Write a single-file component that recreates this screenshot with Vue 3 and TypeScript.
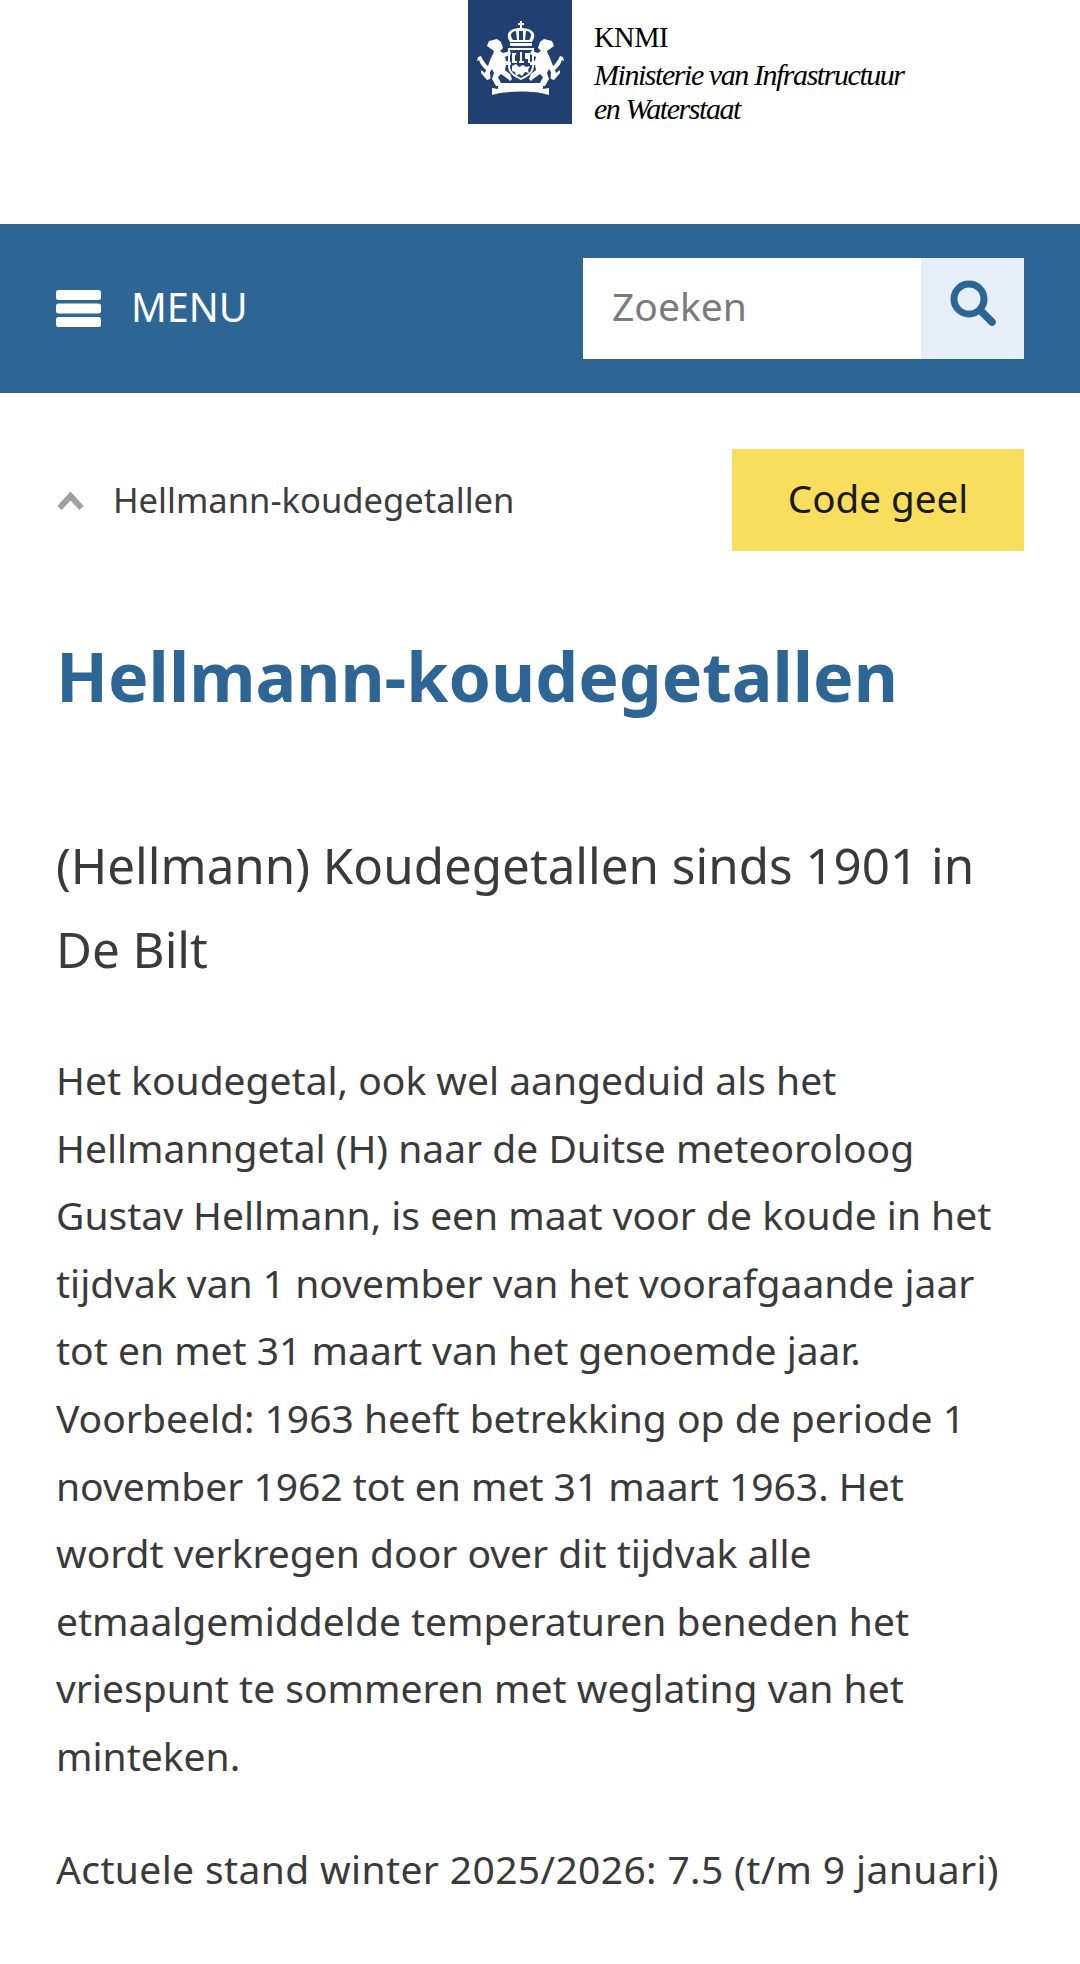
<template>
  <div class="page">
    <header class="brand">
      <div class="logo-block">
        <svg class="crest" viewBox="0 0 89 74" aria-hidden="true">
          <defs>
            <path
              id="lion"
              d="M11 25l2-5 8-2 4 3 2 6-3 3 3 2 7-2 1 3-6 3 1 4 5 1v3l-5 0-1 5 5 4 2 5-2 2-2-2-7-5-3 3 3 6 4 1v2h-9l-4-7 2-6-2-4-2 3c0 3 1 5 0 7l-3 1c-2-2-4-5-6-7l0-3 4 3 1-3c-3-3-6-6-7-10l-2 1 1-4 3-1 2 4c2 2 3 5 5 6l3-8c1-3 3-5 3-7z"
            />
          </defs>
          <g fill="#fff">
            <!-- crown -->
            <path d="M44 0h2v2h2v2h-2v3h-2v-3h-2v-2h2z" />
            <path
              fill-rule="evenodd"
              d="M32 13c1-4 7-6 13-6s12 2 13 6c1 3-1 6-2 8H34c-1-2-3-5-2-8zm3 1c0 2 1 4 2 5h4l-1-9c-3 0-5 2-5 4zm8-4v9h4v-9zm7 0-1 9h4c1-1 2-3 2-5s-2-4-5-4z"
            />
            <rect x="34" y="22" width="22" height="3" />
            <!-- shield -->
            <path
              fill-rule="evenodd"
              d="M32 27h26v18c0 7-6 11-13 14-7-3-13-7-13-14zm2 2v16c0 6 5 9 11 12 6-3 11-6 11-12V29z"
            />
            <path d="M36 32h4v2h-1v6h2v2h-5zM44 31h2v9h2v2h-5v-2h1zM49 32h5v10h-2v-4h-3zM36 45l4-2 3 3 4-2 3 2 4-1-2 4 1 3-4-1-3 4-3-2-3 2-1-4-3-1z" />
            <use href="#lion" />
            <use href="#lion" transform="matrix(-1 0 0 1 89 0)" />
            <!-- ribbon -->
            <path d="M22 62h45v6l6-1v7l-8-2c-13-2-27-2-41 0l-8 2v-7l6 1z" />
          </g>
        </svg>
      </div>
      <div class="wordmark">
        <div class="org">KNMI</div>
        <div class="ministry">Ministerie van Infrastructuur<br />en Waterstaat</div>
      </div>
    </header>

    <nav class="navbar">
      <div class="menu">
        <svg class="burger" viewBox="0 0 45 37" aria-hidden="true">
          <rect y="0" width="45" height="10" rx="2.500" />
          <rect y="13.500" width="45" height="10" rx="2.500" />
          <rect y="27" width="45" height="10" rx="2.500" />
        </svg>
        <span>MENU</span>
      </div>
      <div class="search">
        <div class="search-input">Zoeken</div>
        <div class="search-btn">
          <svg viewBox="0 0 46 46" aria-hidden="true">
            <circle cx="19" cy="19" r="15" fill="none" stroke="#2d6695" stroke-width="7" />
            <path d="M31 31l11 11" stroke="#2d6695" stroke-width="7.500" stroke-linecap="round" />
          </svg>
        </div>
      </div>
    </nav>

    <div class="crumbs">
      <div class="crumb">
        <svg class="chev" viewBox="0 0 28 20" aria-hidden="true">
          <path d="M3 17L14 5l11 12" fill="none" stroke="#a0a0a0" stroke-width="6" />
        </svg>
        <span>Hellmann-koudegetallen</span>
      </div>
      <div class="code">Code geel</div>
    </div>

    <main class="content">
      <h1>Hellmann-koudegetallen</h1>
      <h2>(Hellmann) Koudegetallen sinds 1901 in De Bilt</h2>
      <p class="intro">
        Het koudegetal, ook wel aangeduid als het<br />
        Hellmanngetal (H) naar de Duitse meteoroloog<br />
        Gustav Hellmann, is een maat voor de koude in het<br />
        tijdvak van 1 november van het voorafgaande jaar<br />
        tot en met 31 maart van het genoemde jaar.<br />
        Voorbeeld: 1963 heeft betrekking op de periode 1<br />
        november 1962 tot en met 31 maart 1963. Het<br />
        wordt verkregen door over dit tijdvak alle<br />
        etmaalgemiddelde temperaturen beneden het<br />
        vriespunt te sommeren met weglating van het<br />
        minteken.
      </p>
      <p class="stand">Actuele stand winter 2025/2026: 7.5 (t/m 9 januari)</p>
    </main>
  </div>
</template>

<script setup lang="ts"></script>

<style>
html,
body {
  margin: 0;
  background: #fff;
}
</style>

<style scoped>
.page {
  width: 1080px;
  height: 1964px;
  overflow: hidden;
  background: #fff;
  font-family: "Noto Sans", "Open Sans", sans-serif;
  color: #3a3a3a;
}

.brand {
  height: 224px;
  display: flex;
  align-items: flex-start;
  padding-left: 468px;
  box-sizing: border-box;
}

.logo-block {
  width: 104px;
  height: 124px;
  background: #213f70;
  display: flex;
  justify-content: center;
  padding-top: 21px;
  box-sizing: border-box;
}

.crest {
  width: 89px;
  height: 74px;
}

.wordmark {
  margin-left: 22px;
  padding-top: 17px;
  color: #000;
  font-family: "Liberation Serif", serif;
}

.org {
  font-size: 28.500px;
  line-height: 41px;
  letter-spacing: -0.5px;
}

.ministry {
  font-size: 30px;
  line-height: 34px;
  font-style: italic;
  letter-spacing: -1.450px;
}

.navbar {
  height: 169px;
  background: #2d6695;
  display: flex;
  align-items: center;
  justify-content: space-between;
  padding: 0 56px;
}

.menu {
  display: flex;
  align-items: center;
  gap: 30px;
  color: #fff;
  font-size: 39.500px;
  line-height: 50px;
}

.menu span {
  margin-bottom: 4px;
}

.burger {
  width: 45px;
  height: 37px;
  fill: #fff;
}

.search {
  display: flex;
  height: 101px;
  width: 441px;
}

.search-input {
  flex: 1;
  background: #fff;
  color: #7a7a7a;
  font-size: 39px;
  line-height: 96px;
  padding-left: 29px;
}

.search-btn {
  width: 103px;
  background: #e6eff8;
  display: flex;
  justify-content: center;
  padding-top: 22px;
  box-sizing: border-box;
}

.search-btn svg {
  width: 46px;
  height: 46px;
}

.crumbs {
  display: flex;
  align-items: center;
  justify-content: space-between;
  padding: 56px 56px 0;
}

.crumb {
  display: flex;
  align-items: center;
  gap: 28px;
  font-size: 34.600px;
  color: #3c3c3c;
}

.crumb span {
  margin-bottom: 2px;
}

.chev {
  width: 29px;
  height: 20px;
  margin-top: 2px;
}

.code {
  width: 292px;
  height: 102px;
  background: #f9dd5c;
  color: #1a1a1a;
  font-size: 38.600px;
  line-height: 98px;
  text-align: center;
}

.content {
  padding: 0 56px;
}

h1 {
  margin: 85px 0 0;
  color: #2d6695;
  font-size: 68px;
  line-height: 80px;
  font-weight: 700;
}

h2 {
  margin: 107px 0 0;
  font-size: 49.300px;
  line-height: 84px;
  font-weight: 400;
}

p {
  font-size: 39px;
  line-height: 67.600px;
  white-space: nowrap;
}

.intro {
  margin: 55px 0 0;
}

.stand {
  margin: 45px 0 0;
  letter-spacing: 0.37px;
}
</style>
